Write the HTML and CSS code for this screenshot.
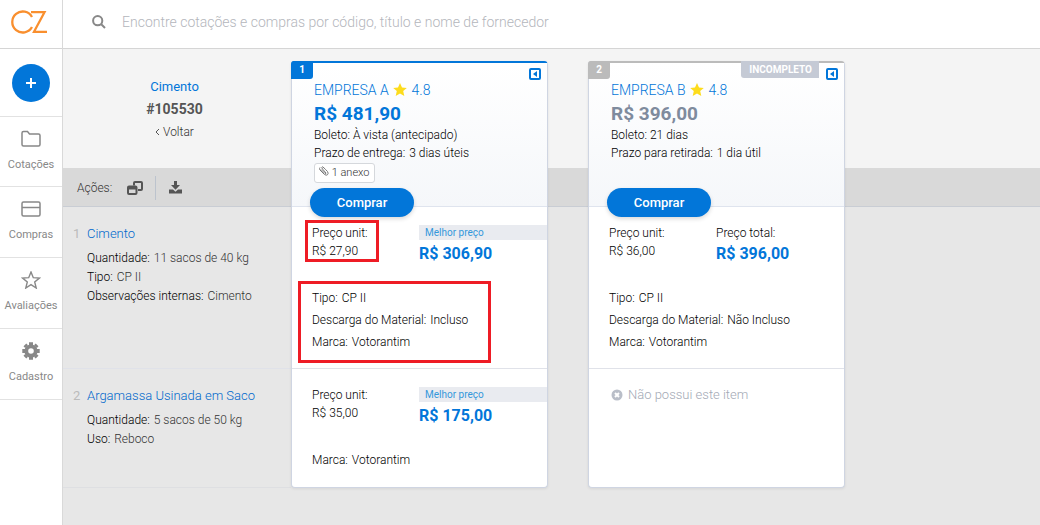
FILE: index.html
```
<!DOCTYPE html>
<html lang="pt-BR">
<head>
    <meta charset="UTF-8">
    <meta name="viewport" content="width=device-width, initial-scale=1">
    <title>Cimento #105530</title>
    <link rel="stylesheet" href="styles.css">
</head>
<body>
    <nav class="sidebar">
        <a class="logo" href="#" aria-label="Início">
            <svg width="38" height="24" viewBox="0 0 38 24" fill="none" stroke="#f98f2e" stroke-width="2.300">
                <path d="M22 7A10.500 10.500 0 1 0 22 17"/>
                <path d="M21 2.200H34.500L24 21.800H37"/>
            </svg>
        </a>
        <div class="novo">
            <button class="btn-novo" type="button" aria-label="Nova cotação">
                <svg width="10" height="10" viewBox="0 0 10 10" stroke="#fff" stroke-width="2"><path d="M5 0V10M0 5H10"/></svg>
            </button>
        </div>
        <a class="menu-item" href="#">
            <svg width="20" height="18" viewBox="0 0 20 18" fill="none" stroke="#888" stroke-width="1.500">
                <path d="M1 14.500V3Q1 1.500 2.500 1.500H6.500L8.500 4H17.500Q19 4 19 5.500V14.500Q19 16 17.500 16H2.500Q1 16 1 14.500Z"/>
            </svg>
            <span>Cotações</span>
        </a>
        <a class="menu-item" href="#">
            <svg width="20" height="18" viewBox="0 0 20 18" fill="none" stroke="#888" stroke-width="1.500">
                <rect x="1" y="2" width="18" height="14" rx="1.500"/>
                <path d="M1 7.500H19"/>
            </svg>
            <span>Compras</span>
        </a>
        <a class="menu-item" href="#">
            <svg width="20" height="18" viewBox="0 0 20 18" fill="none" stroke="#888" stroke-width="1.400">
                <path d="M10 1L12.300 6.700L18.400 7.100L13.700 11L15.200 17L10 13.700L4.800 17L6.300 11L1.600 7.100L7.700 6.700Z"/>
            </svg>
            <span>Avaliações</span>
        </a>
        <a class="menu-item" href="#">
            <svg width="20" height="18" viewBox="0 0 20 18" fill="none" stroke="#888">
                <circle cx="10" cy="9" r="4.700" stroke-width="3.800"/>
                <path stroke-width="4" d="M10 .3V3M10 15V17.700M1.300 9H4M16 9H18.700M3.900 2.900L5.600 4.600M14.400 13.400L16.100 15.100M3.900 15.100L5.600 13.400M14.400 4.600L16.100 2.900"/>
            </svg>
            <span>Cadastro</span>
        </a>
    </nav>

    <div class="conteudo">
        <header class="topo">
            <label for="busca" aria-label="Buscar">
                <svg width="14" height="14" viewBox="0 0 14 14" fill="none" stroke="#888" stroke-width="2">
                    <circle cx="5.700" cy="5.700" r="4.600"/>
                    <path d="M9 9L13 13"/>
                </svg>
            </label>
            <input id="busca" type="text" placeholder="Encontre cotações e compras por código, título e nome de fornecedor">
        </header>

        <main class="mapa">
            <section class="pedido">
                <div class="pedido-info">
                    <a class="titulo" href="#">Cimento</a>
                    <strong>#105530</strong>
                    <a class="voltar" href="#"><svg width="5" height="8" viewBox="0 0 5 8" fill="none" stroke="#555"><path d="M4 1L1 4L4 7"/></svg> Voltar</a>
                </div>
                <div class="acoes">
                    <span>Ações:</span>
                    <button type="button" aria-label="Comparar">
                        <svg width="16" height="14" viewBox="0 0 16 14" fill="none" stroke="#555" stroke-width="2">
                            <path d="M7 4.500V2Q7 1 8 1H14Q15 1 15 2V8Q15 9 14 9H11"/>
                            <rect x="1" y="5.500" width="8.500" height="7.500" rx="1"/>
                            <path d="M1 7H9.500" stroke-width="3"/>
                        </svg>
                    </button>
                    <button class="baixar" type="button" aria-label="Baixar">
                        <svg width="13" height="13" viewBox="0 0 13 13" fill="#555">
                            <path d="M5 0H8V4H11L6.500 8.700L2 4H5Z"/>
                            <path d="M0 8.500H4L6.500 10.700L9 8.500H13V12.500H0Z"/>
                        </svg>
                    </button>
                </div>
                <article class="item item-1">
                    <span class="num">1</span>
                    <div>
                        <h2><a href="#">Cimento</a></h2>
                        <p>Quantidade: <span>11 sacos de 40 kg</span></p>
                        <p>Tipo: <span>CP II</span></p>
                        <p>Observações internas: <span>Cimento</span></p>
                    </div>
                </article>
                <article class="item item-2">
                    <span class="num">2</span>
                    <div>
                        <h2><a href="#">Argamassa Usinada em Saco</a></h2>
                        <p>Quantidade: <span>5 sacos de 50 kg</span></p>
                        <p>Uso: <span>Reboco</span></p>
                    </div>
                </article>
            </section>

            <section class="proposta melhor">
                <div class="cabecalho">
                    <span class="posicao">1</span>
                    <button class="recolher" type="button" aria-label="Recolher">
                        <svg width="12" height="12" viewBox="0 0 12 12"><rect x="1" y="1" width="10" height="10" rx="1" fill="none" stroke="#0276d9" stroke-width="2"/><path d="M8 3V9L4 6Z" fill="#0276d9"/></svg>
                    </button>
                    <a class="empresa" href="#">EMPRESA A <svg width="14" height="13" viewBox="0 0 14 13" fill="#fddc1c"><path d="M7 0L9 4.400L13.800 4.900L10.200 8.100L11.300 12.900L7 10.400L2.700 12.900L3.800 8.100L.2 4.900L5 4.400Z"/></svg> 4.8</a>
                    <strong class="total">R$ 481,90</strong>
                    <p>Boleto: À vista (antecipado)</p>
                    <p>Prazo de entrega: <span>3 dias úteis</span></p>
                    <a class="anexo" href="#"><svg width="10" height="10" viewBox="0 0 10 10" fill="none" stroke="#777"><path d="M2 3.500L6 7.500Q7 8 7 7L3.500 3Q2 1 3.500 .8Q4 .7 8.500 5.500Q9.800 7.500 8.500 8.700Q7.500 9.800 5.500 8.500L1 4Q0 2.500 1 1.500"/></svg> 1 anexo</a>
                    <button class="comprar" type="button">Comprar</button>
                </div>
                <div class="oferta item-1">
                    <div class="precos">
                        <div class="unitario marcado">Preço unit:<br>R$ 27,90</div>
                        <div class="preco-total">
                            <span class="selo">Melhor preço</span>
                            <strong>R$ 306,90</strong>
                        </div>
                    </div>
                    <div class="detalhes marcado">
                        <p>Tipo: <span>CP II</span></p>
                        <p>Descarga do Material: <span>Incluso</span></p>
                        <p>Marca: <span>Votorantim</span></p>
                    </div>
                </div>
                <div class="oferta item-2">
                    <div class="precos">
                        <div class="unitario">Preço unit:<br>R$ 35,00</div>
                        <div class="preco-total">
                            <span class="selo">Melhor preço</span>
                            <strong>R$ 175,00</strong>
                        </div>
                    </div>
                    <div class="detalhes">
                        <p>Marca: <span>Votorantim</span></p>
                    </div>
                </div>
            </section>

            <section class="proposta">
                <div class="cabecalho">
                    <span class="posicao">2</span>
                    <span class="incompleto">INCOMPLETO</span>
                    <button class="recolher" type="button" aria-label="Recolher">
                        <svg width="12" height="12" viewBox="0 0 12 12"><rect x="1" y="1" width="10" height="10" rx="1" fill="none" stroke="#0276d9" stroke-width="2"/><path d="M8 3V9L4 6Z" fill="#0276d9"/></svg>
                    </button>
                    <a class="empresa" href="#">EMPRESA B <svg width="14" height="13" viewBox="0 0 14 13" fill="#fddc1c"><path d="M7 0L9 4.400L13.800 4.900L10.200 8.100L11.300 12.900L7 10.400L2.700 12.900L3.800 8.100L.2 4.900L5 4.400Z"/></svg> 4.8</a>
                    <strong class="total">R$ 396,00</strong>
                    <p>Boleto: 21 dias</p>
                    <p>Prazo para retirada: <span>1 dia útil</span></p>
                    <button class="comprar" type="button">Comprar</button>
                </div>
                <div class="oferta item-1">
                    <div class="precos">
                        <div class="unitario">Preço unit:<br>R$ 36,00</div>
                        <div class="preco-total">
                            <span>Preço total:</span>
                            <strong>R$ 396,00</strong>
                        </div>
                    </div>
                    <div class="detalhes">
                        <p>Tipo: <span>CP II</span></p>
                        <p>Descarga do Material: <span>Não Incluso</span></p>
                        <p>Marca: <span>Votorantim</span></p>
                    </div>
                </div>
                <div class="oferta item-2">
                    <p class="sem-item"><svg width="12" height="12" viewBox="0 0 12 12"><circle cx="6" cy="6" r="5.500" fill="#b9bec8"/><path d="M4 4L8 8M8 4L4 8" stroke="#fff" stroke-width="2"/></svg> Não possui este item</p>
                </div>
            </section>
        </main>
    </div>
</body>
</html>
```

FILE: styles.css
```
*, *::after {
    margin: 0;
    padding: 0;
    box-sizing: border-box;
}
body {
    display: flex;
    min-height: 100vh;
    font: 300 12px/18px Roboto, "Liberation Sans", sans-serif;
    color: #000;
    background: #fff;
}
a {
    color: #0276d9;
    text-decoration: none;
}
button {
    border: 0;
    background: none;
    font-family: inherit;
    cursor: pointer;
}
svg {
    flex: none;
}

/* menu lateral */
.sidebar {
    flex: none;
    width: 63px;
    border-right: 1px solid #d9d9d9;
}
.logo {
    display: flex;
    align-items: center;
    height: 49px;
    padding: 0 0 4px 10px;
    border-bottom: 1px solid #d5d5d5;
}
.novo {
    display: flex;
    align-items: center;
    justify-content: center;
    height: 68px;
    border-bottom: 1px solid #e2e2e2;
}
.btn-novo {
    display: flex;
    align-items: center;
    justify-content: center;
    width: 38px;
    height: 38px;
    border-radius: 50%;
    background: #0276d9;
}
.menu-item {
    display: flex;
    flex-direction: column;
    align-items: center;
    justify-content: center;
    gap: 8px;
    min-height: 70px;
    border-bottom: 1px solid #e2e2e2;
    color: #888;
    font-size: 11px;
    font-weight: 400;
}
.menu-item + .menu-item {
    min-height: 71px;
}

.conteudo {
    flex: 1;
    display: flex;
    flex-direction: column;
    min-width: 0;
}
.topo {
    display: flex;
    align-items: center;
    gap: 16px;
    height: 49px;
    padding: 0 29px 4px;
    border-bottom: 1px solid #d5d5d5;
}
.topo label {
    display: flex;
}
.topo input {
    flex: 1;
    border: 0;
    outline: 0;
    font: 300 14px/20px Roboto, "Liberation Sans", sans-serif;
}
.topo input::placeholder {
    color: #b4b6bc;
}

/* mapa comparativo: as faixas do fundo acompanham a primeira coluna */
.mapa {
    flex: 1;
    display: grid;
    grid-template-columns: 188px 257px 257px;
    align-items: start;
    column-gap: 40px;
    background: linear-gradient(#f4f4f4 119px, #d9d9d9 119px 157px, #c9cdd4 157px 158px, #e7e7e7 158px);
}
.pedido {
    margin-right: -40px;
}
.pedido-info {
    display: flex;
    flex-direction: column;
    align-items: center;
    height: 119px;
    padding: 27px 5px 0 0;
    line-height: 22px;
}
.titulo {
    font-size: 13px;
    font-weight: 400;
}
.pedido-info strong {
    font-size: 14px;
    font-weight: 700;
    color: #555;
}
.voltar {
    color: #333;
    line-height: 24px;
}
.acoes {
    display: flex;
    align-items: center;
    height: 39px;
    padding-left: 14px;
    color: #333;
}
.acoes button {
    display: flex;
    align-items: center;
    height: 24px;
    padding: 0 12px 0 15px;
}
.acoes .baixar {
    border-left: 1px solid #bcc3cd;
    padding-left: 13px;
}
.item {
    display: flex;
}
.item-1 {
    height: 162px;
    border-bottom: 1px solid #e0e2e9;
}
.item-2 {
    height: 118px;
}
.item.item-2 {
    height: 119px;
    border-bottom: 1px solid #dedfe2;
}
.item .num {
    width: 24px;
    padding: 18px 0 0 10px;
    font-size: 13px;
    font-weight: 400;
    color: #bbb;
}
.item h2 {
    margin: 18px 0 6px;
    font-size: 13px;
    font-weight: 300;
}
.item h2 a {
    color: #0068cc;
}
.item p {
    line-height: 19px;
}
.item p span {
    color: #333;
}
p span {
    margin-left: 1px;
}

/* propostas */
.proposta {
    margin-top: 12px;
    border: 1px solid #cfd5e2;
    border-top: 2px solid #bbb;
    border-radius: 4px;
    background: #fff;
    box-shadow: 0 1px 3px rgba(0, 0, 0, .08);
}
.cabecalho {
    position: relative;
    display: flex;
    flex-direction: column;
    align-items: flex-start;
    height: 144px;
    padding: 18px 22px 0;
    border-bottom: 1px solid #dfe4ee;
    background: linear-gradient(#fff, #f5f7fa);
}
.posicao {
    position: absolute;
    top: -2px;
    left: -1px;
    width: 22px;
    height: 18px;
    border-radius: 3px 0 3px 0;
    background: #bbb;
    color: #fff;
    font-size: 10px;
    font-weight: 700;
    line-height: 17px;
    text-align: center;
}
.melhor {
    border-top-color: #0276d9;
}
.melhor .posicao {
    background: #0276d9;
}
.incompleto {
    position: absolute;
    top: -2px;
    right: 25px;
    padding: 0 7px 0 8px;
    border-radius: 0 0 0 3px;
    background: #c5cad5;
    color: #fff;
    font-size: 10px;
    font-weight: 700;
    line-height: 17px;
}
.recolher {
    position: absolute;
    top: 5px;
    right: 6px;
    display: flex;
}
.empresa {
    font-size: 14px;
}
.empresa svg {
    margin: 0 1px;
    vertical-align: -1px;
}
.total {
    margin-top: 3px;
    font-size: 19px;
    font-weight: 700;
    line-height: 24px;
    color: #7f8b9d;
}
.melhor .total {
    color: #0276d9;
}
.anexo {
    margin-top: 1px;
    padding: 0 4px;
    border: 1px solid #d5d8dc;
    border-radius: 3px;
    background: #fff;
    color: #333;
    font-size: 11px;
}
.comprar {
    position: absolute;
    bottom: -11px;
    left: 18px;
    width: 104px;
    height: 29px;
    border-radius: 15px;
    background: #0276d9;
    box-shadow: 0 2px 4px rgba(0, 0, 0, .15);
    color: #fff;
    font-size: 13px;
    font-weight: 500;
}
.oferta {
    padding: 17px 0 0 20px;
}
.precos {
    display: flex;
    justify-content: space-between;
    height: 53px;
}
.preco-total {
    display: flex;
    flex-direction: column;
    width: 128px;
}
.preco-total strong {
    font-size: 16px;
    font-weight: 700;
    line-height: 24px;
    color: #0276d9;
}
.selo {
    margin-top: 1px;
    padding-left: 6px;
    background: #e9ebf0;
    color: #3498db;
    font-size: 10px;
    font-weight: 400;
    line-height: 15px;
}
.selo + strong {
    margin-top: 2px;
}
.detalhes {
    padding-top: 10px;
}
.detalhes p {
    line-height: 22px;
}
/* contornos vermelhos sobre o texto */
.marcado {
    position: relative;
}
.marcado::after {
    content: "";
    position: absolute;
    top: -4px;
    left: -7px;
    width: 74px;
    height: 42px;
    border: 3px solid #ee1c25;
}
.detalhes.marcado::after {
    top: 4px;
    left: -14px;
    width: 193px;
    height: 82px;
}
.sem-item {
    display: flex;
    align-items: center;
    gap: 5px;
    padding-left: 2px;
    color: #a3a9b5;
    font-size: 13px;
}
```
